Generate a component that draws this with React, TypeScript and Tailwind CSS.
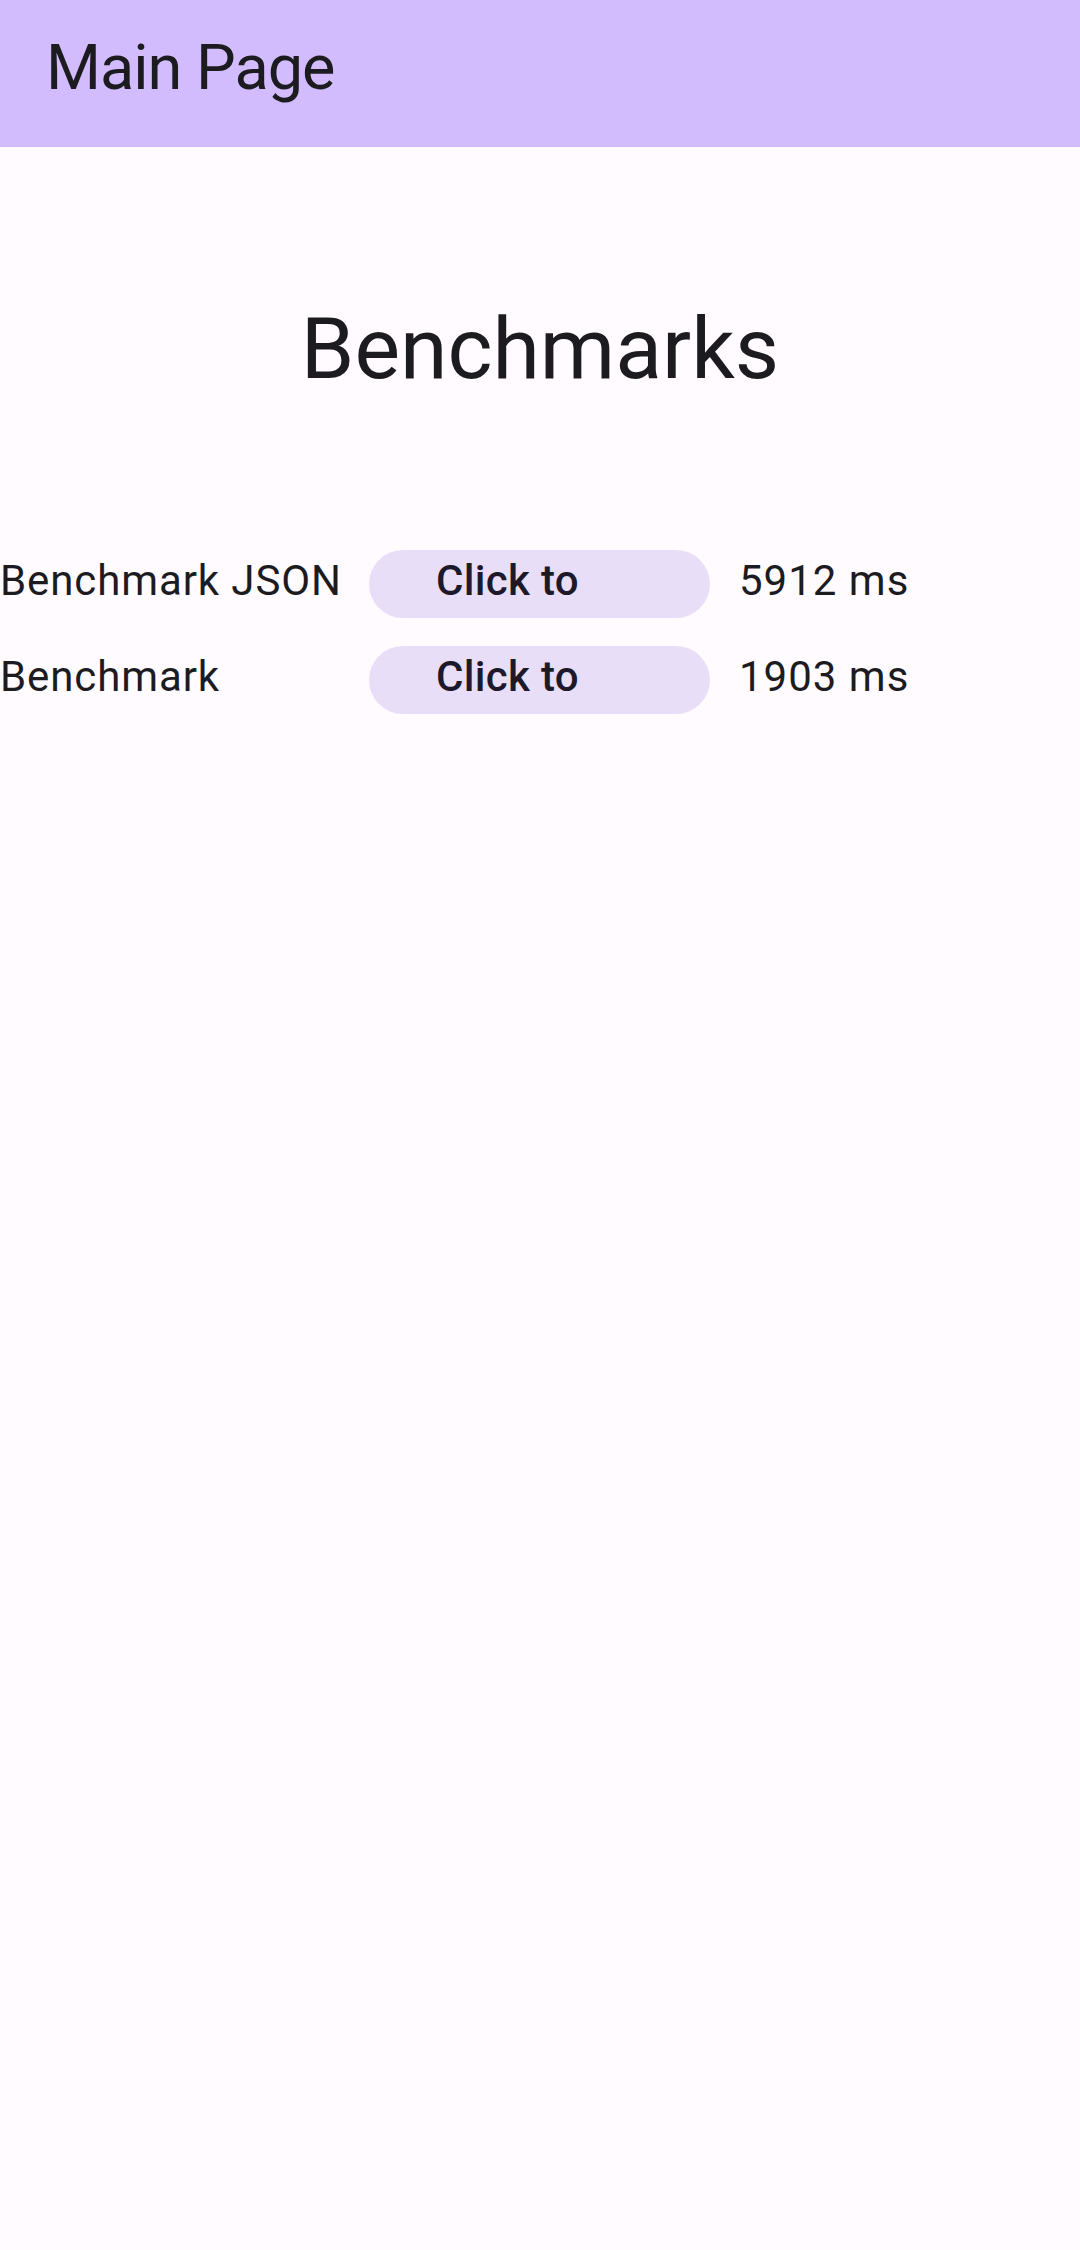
export default function App() {
  const rows = [
    { label: "Benchmark JSON", value: "5912 ms" },
    { label: "Benchmark", value: "1903 ms" },
  ];
  return (
    <div className="min-h-[2250px] w-[1080px] bg-[#fffbfe] text-[#1c1b1f]" style={{ fontFamily: "Roboto, sans-serif" }}>
      <div className="h-[147px] bg-[#d2bcfd] flex items-center pl-[46px] pb-[12px]">
        <span className="text-[63px] leading-none tracking-[-1px]">Main Page</span>
      </div>
      <div className="flex justify-center pt-[159px]">
        <span className="text-[86px] leading-none">Benchmarks</span>
      </div>
      <div className="mt-[158px] flex flex-col gap-[28px]">
        {rows.map((r) => (
          <div key={r.label} className="flex items-center h-[68px]">
            <div className="w-[369px] pb-[6px] text-[42px] leading-none tracking-[0.9px]">{r.label}</div>
            <div className="w-[341px] h-[68px] rounded-full bg-[#e8def8] flex items-center pl-[67px]">
              <span className="pb-[6px] text-[42px] font-medium leading-none tracking-[0.3px] text-[#1d192b]">Click to</span>
            </div>
            <div className="pl-[29px] pb-[6px] text-[42px] leading-none tracking-[1px]">{r.value}</div>
          </div>
        ))}
      </div>
    </div>
  );
}
